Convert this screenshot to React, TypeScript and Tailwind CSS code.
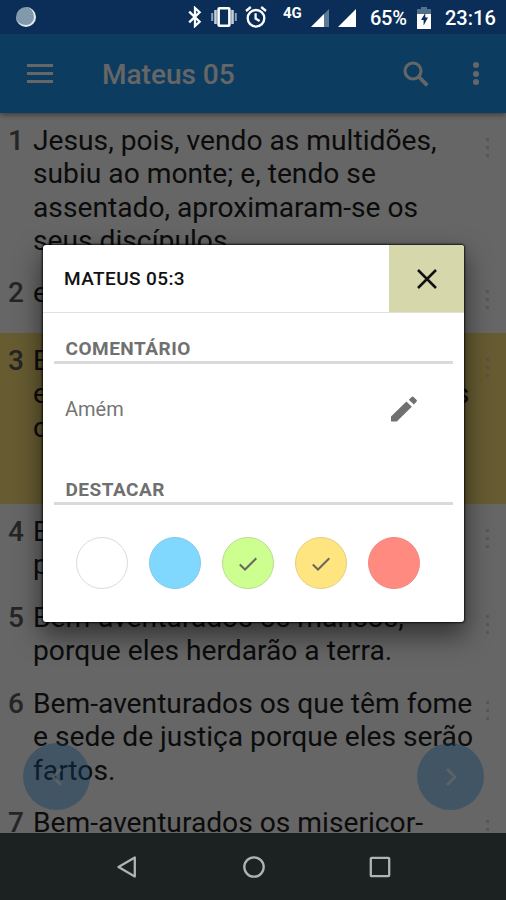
import type { ReactNode } from 'react';

type Verse = { n: number; lines: string[]; box: string; dot?: string };

const verses: Verse[] = [
  {
    n: 1,
    lines: ['Jesus, pois, vendo as multidões,', 'subiu ao monte; e, tendo se', 'assentado, aproximaram-se os', 'seus discípulos.'],
    box: 'h-[152px]',
  },
  { n: 2, lines: ['e ele os ensinava, dizendo:'], box: 'h-[68px]' },
  {
    n: 3,
    lines: ['Bem-aventurados os pobres de', 'espírito, porque deles é o reino dos', 'céus.'],
    box: 'h-[171px] bg-[#ffe37c]',
    dot: 'bg-[#d8cbb0]',
  },
  { n: 4, lines: ['Bem-aventurados os que choram,', 'porque eles serão consolados.'], box: 'h-[86px]' },
  { n: 5, lines: ['Bem-aventurados os mansos,', 'porque eles herdarão a terra.'], box: 'h-[86px]' },
  { n: 6, lines: ['Bem-aventurados os que têm fome', 'e sede de justiça porque eles serão', 'fartos.'], box: 'h-[119px]' },
  { n: 7, lines: ['Bem-aventurados os misericor-'], box: 'h-[86px]' },
];

const swatches = [
  { color: 'bg-white border-[#dcdcdc]', checked: false },
  { color: 'bg-[#80d8ff] border-[#86c8e6]', checked: false },
  { color: 'bg-[#ccff90] border-[#b9dc92]', checked: true },
  { color: 'bg-[#ffe57f] border-[#e2cf86]', checked: true },
  { color: 'bg-[#ff8a80] border-[#ee8a82]', checked: false },
];

function StatusBar() {
  return (
    <header className="relative z-20 flex h-[34px] shrink-0 items-center bg-[#0a2e57] text-[20px] font-medium text-white">
      <span className="ml-4 h-5 w-5 rounded-full border-r-2 border-b-2 border-[#e3ebf0] bg-[#8299ab]" />
      <svg className="ml-[152px] h-[22px] w-[14px] shrink-0" viewBox="0 0 14 22" fill="none" stroke="white" strokeWidth="2.3">
        <path d="M1.2 5.6 11.6 15.8 7 20V2l4.6 4.2L1.2 16.4" />
      </svg>
      <svg className="ml-[9px] h-[22px] w-[26px] shrink-0" viewBox="0 0 26 22">
        <path d="M1.2 7v8M24.8 7v8" stroke="#8fa3b8" strokeWidth="2" />
        <path d="M4.5 4v14M21.5 4v14" stroke="#c3cedb" strokeWidth="2.6" />
        <rect x="7.6" y="2.2" width="10.8" height="17.6" rx="1" fill="none" stroke="white" strokeWidth="2.6" />
      </svg>
      <svg className="ml-[8px] h-[22px] w-[22px] shrink-0" viewBox="0 0 22 22" fill="none" stroke="white" strokeWidth="2.3">
        <circle cx="11" cy="12.3" r="8.3" />
        <path d="M1 5 5.8 1M21 5l-4.8-4M10.6 7.2v5.4l4 2.4" />
      </svg>
      <span className="mb-[8px] ml-[16px] w-[22px] text-[15px] leading-none font-bold">4G</span>
      <svg className="mt-[2px] ml-[6px] h-[18px] w-[18px] shrink-0" viewBox="0 0 18 18">
        <path d="M0 18 18 0v18z" fill="#5d7892" />
        <path d="M0 18 13 5v13z" fill="white" />
      </svg>
      <svg className="mt-[2px] ml-[9px] h-[18px] w-[18px] shrink-0" viewBox="0 0 18 18">
        <path d="M0 18 18 0v18z" fill="white" />
      </svg>
      <span className="mt-[2px] ml-[14px] w-[37px] leading-none tracking-[-0.3px]">65%</span>
      <svg className="mt-[1px] ml-[10px] h-[22px] w-[14px] shrink-0" viewBox="0 0 14 22">
        <path d="M4 0h6v2h4v6H0V2h4z" fill="#53708b" />
        <path d="M0 7h14v15H0z" fill="white" />
        <path d="M8.3 6 4 13h2.6v5.5l4.4-8H8.3z" fill="#0a2e57" />
      </svg>
      <span className="mt-[2px] ml-[14px] leading-none">23:16</span>
    </header>
  );
}

function AppBar() {
  return (
    <div className="flex h-[79px] shrink-0 items-center bg-[#1e96f0] text-white shadow-[0_2px_5px_rgba(0,0,0,0.4)]">
      <div className="ml-[27px] flex w-[26px] flex-col gap-[5px]">
        <span className="h-[3px] bg-white" />
        <span className="h-[3px] bg-white" />
        <span className="h-[3px] bg-white" />
      </div>
      <h1 className="mt-[2px] ml-[49px] text-[28px] leading-none font-medium">Mateus 05</h1>
      <svg className="mr-[44px] ml-auto h-[26px] w-[26px]" viewBox="0 0 26 26" fill="none" stroke="white">
        <circle cx="10" cy="10" r="8" strokeWidth="3.1" />
        <path d="m15.5 15.5 8.8 8.8" strokeWidth="3.8" />
      </svg>
      <div className="mr-[27px] flex flex-col gap-[2.5px]">
        <span className="h-[6px] w-[6px] rounded-full bg-white" />
        <span className="h-[6px] w-[6px] rounded-full bg-white" />
        <span className="h-[6px] w-[6px] rounded-full bg-white" />
      </div>
    </div>
  );
}

function VerseRow({ n, lines, box, dot = 'bg-[#dadada]' }: Verse) {
  return (
    <div className={`flex shrink-0 pt-[11px] ${box}`}>
      <span className="w-[33px] shrink-0 pl-[8px] text-[28px] leading-[33.3px] font-medium text-[#5c5c5c]">{n}</span>
      <p className="min-w-0 flex-1 text-[28.2px] leading-[33.3px] whitespace-nowrap text-[#202020]">
        {lines.map((line) => (
          <span key={line} className="block">
            {line}
          </span>
        ))}
      </p>
      <div className="mt-[14px] mr-[17px] flex flex-col gap-[5px]">
        <span className={`h-[3px] w-[3px] ${dot}`} />
        <span className={`h-[3px] w-[3px] ${dot}`} />
        <span className={`h-[3px] w-[3px] ${dot}`} />
      </div>
    </div>
  );
}

function RoundButton({ side, d }: { side: string; d: string }) {
  return (
    <button className={`absolute bottom-[23px] flex h-[67px] w-[67px] items-center justify-center rounded-full bg-[#2196f3]/40 ${side}`}>
      <svg className="h-[18px] w-[12px]" viewBox="0 0 12 18" fill="none" stroke="white" strokeOpacity="0.75" strokeWidth="2.6">
        <path d={d} />
      </svg>
    </button>
  );
}

function SectionTitle({ children }: { children: ReactNode }) {
  return (
    <h3 className="mx-[11px] border-b-[3px] border-[#dadada] pb-[1px] pl-[12px] text-[19px] leading-[22px] font-bold tracking-[0.5px] text-[#707070]">
      {children}
    </h3>
  );
}

function Dialog() {
  return (
    <section className="absolute top-[245px] left-[42.5px] z-10 flex h-[377px] w-[421.5px] flex-col overflow-hidden rounded-[3px] bg-white shadow-[0_0_2px_1px_rgba(0,0,0,0.75),0_12px_26px_2px_rgba(0,0,0,0.5)]">
      <div className="flex h-[68px] shrink-0 border-b border-[#e0e0e0]">
        <h2 className="flex-1 pt-[23px] pl-[21.5px] text-[19px] leading-[22px] font-medium tracking-[0.4px] text-[#111111]">MATEUS 05:3</h2>
        <button className="flex w-[75px] items-center justify-center bg-[#d6d8ac]">
          <svg className="h-5 w-5" viewBox="0 0 20 20" stroke="#111111" strokeWidth="2.5">
            <path d="M1 1l18 18M19 1L1 19" />
          </svg>
        </button>
      </div>
      <div className="mt-[25px]">
        <SectionTitle>COMENTÁRIO</SectionTitle>
      </div>
      <div className="mt-[27px] flex h-[35px] items-center justify-between pr-[47px] pl-[22.5px]">
        <p className="text-[20px] text-[#757575]">Amém</p>
        <svg className="h-[26px] w-[26px]" viewBox="0 0 26 26" fill="#707070">
          <path d="M0 20.6 15.4 5.4l5.4 5.3L5.8 25.6H0z" />
          <path d="m17.8 3.8 2.8-2.9q1-1 2 0l2.8 2.8q1 1 0 2l-2.5 2.7z" />
        </svg>
      </div>
      <div className="mt-[53px]">
        <SectionTitle>DESTACAR</SectionTitle>
      </div>
      <div className="mt-[32px] flex gap-[21px] pl-[33px]">
        {swatches.map(({ color, checked }) => (
          <span key={color} className={`flex h-[52px] w-[52px] items-center justify-center rounded-full border ${color}`}>
            {checked && (
              <svg className="mt-[2px] ml-px h-[14px] w-[18px]" viewBox="0 0 18 14" fill="none" stroke="#68685c" strokeWidth="2">
                <path d="M.8 7.5 6 12.5 17.3 1.2" />
              </svg>
            )}
          </span>
        ))}
      </div>
    </section>
  );
}

function NavBar() {
  return (
    <nav className="relative z-20 flex h-[67px] shrink-0 items-center justify-between bg-[#1c2122] pr-[114px] pl-[115px]">
      {['M19.8 2.5v19L3.5 12z', 'M12 2.3a9.7 9.7 0 1 0 0 19.4a9.7 9.7 0 1 0 0-19.4z', 'M3.8 2.8h16.4q1 0 1 1v16.4q0 1-1 1H3.8q-1 0-1-1V3.8q0-1 1-1z'].map((d) => (
        <svg key={d} className="h-6 w-6" viewBox="0 0 24 24" fill="none" stroke="#b0b3b3" strokeWidth="2.3" strokeLinejoin="round">
          <path d={d} />
        </svg>
      ))}
    </nav>
  );
}

export default function App() {
  return (
    <div className="relative flex h-[900px] w-[506px] flex-col overflow-hidden bg-white font-[Roboto,sans-serif]">
      <StatusBar />
      <AppBar />
      <main className="relative flex h-[720px] flex-col overflow-hidden">
        {verses.map((v) => (
          <VerseRow key={v.n} {...v} />
        ))}
        <RoundButton side="left-[23px]" d="M10 1 2 9l8 8" />
        <RoundButton side="right-[22px]" d="M2 1l8 8-8 8" />
      </main>
      <NavBar />
      <div className="absolute inset-0 bg-black/60" />
      <Dialog />
    </div>
  );
}
